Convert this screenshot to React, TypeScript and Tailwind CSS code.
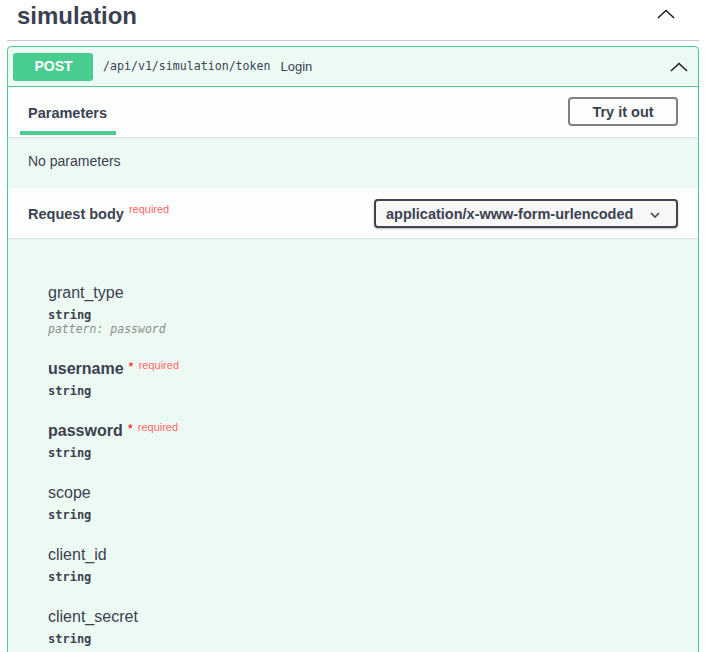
import React from "react";

const sans = "font-['Liberation_Sans',Arial,sans-serif]";
const mono = "font-['DejaVu_Sans_Mono',monospace]";

function ChevronUp({ className }: { className?: string }) {
  return (
    <svg className={className} viewBox="0 0 20 10" fill="none" stroke="#1b1b1b" strokeWidth={1.6}>
      <polyline points="1,9.5 10,1 19,9.5" />
    </svg>
  );
}

type Field = { name: string; required?: boolean; pattern?: string };

const fields: Field[] = [
  { name: "grant_type", pattern: "pattern: password" },
  { name: "username", required: true },
  { name: "password", required: true },
  { name: "scope" },
  { name: "client_id" },
  { name: "client_secret" },
];

function FieldRow({ f }: { f: Field }) {
  return (
    <div>
      <div className="flex items-start leading-[20px]">
        <span className={f.required ? "text-[16px] font-bold" : "text-[16px]"}>{f.name}</span>
        {f.required && (
          <>
            <span className="ml-[5px] text-[13px] leading-[16px] text-[#ff0000]">*</span>
            <span className="ml-[5px] text-[11px] leading-[13px] text-[#ff6666]">required</span>
          </>
        )}
      </div>
      <div className={`${mono} mt-[5px] text-[12px] font-bold leading-[14px] text-[#3b4151]`}>string</div>
      {f.pattern && (
        <div className={`${mono} text-[11.5px] italic leading-[14px] text-[#8a8a8a]`}>{f.pattern}</div>
      )}
    </div>
  );
}

export default function App() {
  return (
    <div className={`${sans} min-h-[652px] bg-white pl-[7px] pr-[8px] text-[#3b4151]`}>
      {/* tag header */}
      <div className="flex h-[41px] items-start justify-between border-b border-[#c4c6cb] pl-[10px] pr-[24px]">
        <h3 className="pt-[1px] text-[24px] font-bold leading-[30px]">simulation</h3>
        <ChevronUp className="mt-[9px] h-[10px] w-[18px]" />
      </div>

      {/* operation block */}
      <div className="mt-[5px] rounded-[4px] border border-[#49cc90] bg-[#edfaf4]">
        <div className="flex h-[40px] items-center border-b border-[#49cc90] pl-[5px] pr-[10px]">
          <span className="flex h-[28px] w-[80px] items-center justify-center rounded-[3px] bg-[#49cc90] pl-[1px] text-[14px] font-bold text-white">
            POST
          </span>
          <span className={`${mono} ml-[10px] text-[11.6px] text-[#3b4151]`}>/api/v1/simulation/token</span>
          <span className="ml-[10px] text-[13px] text-[#3b4151]">Login</span>
          <ChevronUp className="ml-auto h-[10px] w-[18px]" />
        </div>

        {/* parameters header */}
        <div className="flex h-[50px] items-start justify-between bg-white/80 pl-[12px] pr-[20px] shadow-[0_1px_2px_rgba(0,0,0,0.1)]">
          <div className="pt-[15px]">
            <div className="px-[8px] pt-[1px] text-[14.5px] font-bold leading-[20px]">Parameters</div>
            <div className="mt-[8px] h-[4px] w-[96px] bg-[#49cc90]" />
          </div>
          <button className="mt-[10px] h-[29px] w-[110px] rounded-[4px] border-2 border-[#808080] bg-transparent pt-[2px] text-[14.5px] font-bold text-[#3b4151]">
            Try it out
          </button>
        </div>

        <div className="flex h-[51px] items-center px-[20px] pb-[2px] text-[14px]">No parameters</div>

        {/* request body header */}
        <div className="flex h-[50px] items-center justify-between bg-white/80 px-[20px] shadow-[0_1px_2px_rgba(0,0,0,0.1)]">
          <div className="flex items-start pt-[2px]">
            <span className="text-[14.5px] font-bold leading-[20px]">Request body</span>
            <span className="ml-[5px] text-[11px] leading-[11px] text-[#ff6666]">required</span>
          </div>
          <div className="mt-[1px] flex h-[29px] w-[304px] items-center justify-between rounded-[4px] border-2 border-[#41444e] bg-[#f7f7f7] pl-[10px] pr-[16px] pt-[2px] shadow-[0_1px_2px_rgba(0,0,0,0.25)]">
            <span className="text-[14.5px] font-bold">application/x-www-form-urlencoded</span>
            <svg className="h-[6px] w-[10px]" viewBox="0 0 10 6" fill="none" stroke="#3b4151" strokeWidth={1.6}>
              <polyline points="1,1 5,5 9,1" />
            </svg>
          </div>
        </div>

        {/* form schema */}
        <div className="flex flex-col gap-[23px] pb-[40px] pl-[40px] pt-[45px]">
          {fields.map((f) => (
            <FieldRow key={f.name} f={f} />
          ))}
        </div>
      </div>
    </div>
  );
}
